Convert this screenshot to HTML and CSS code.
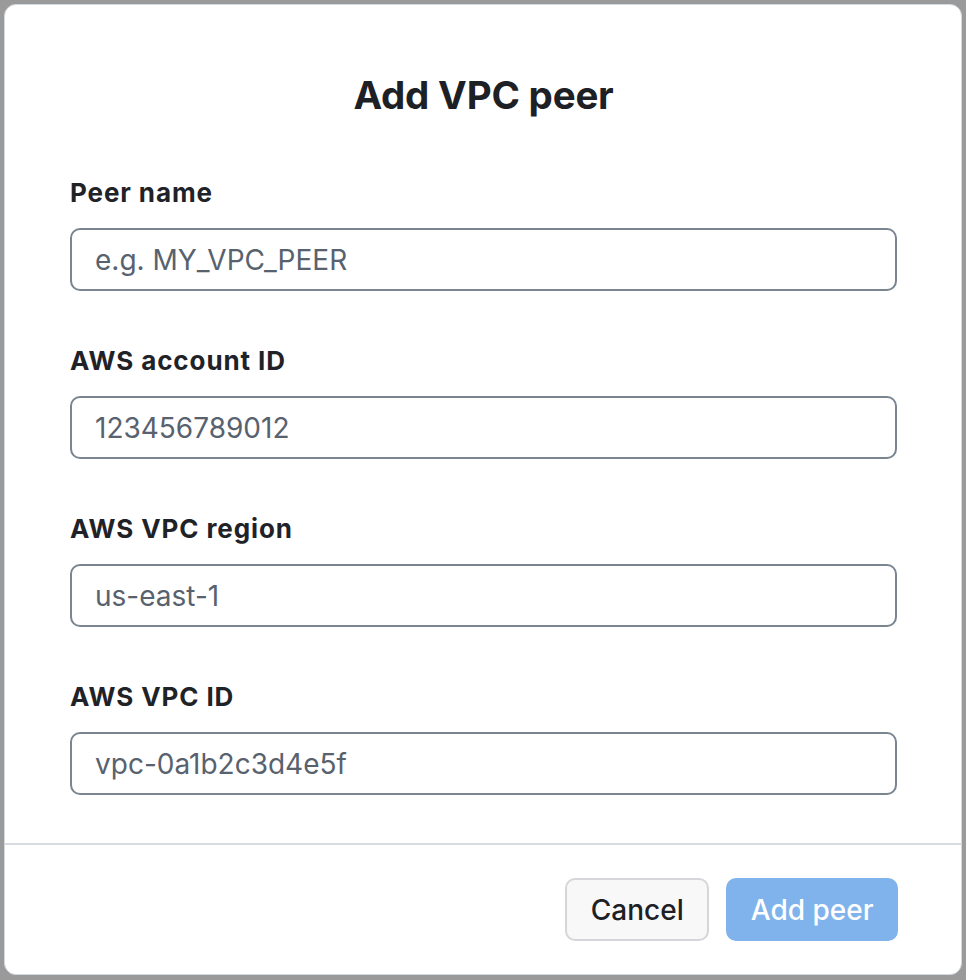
FILE: index.html
```html
<!DOCTYPE html>
<html lang="en">
<head>
<meta charset="utf-8">
<title>Add VPC peer</title>
<link rel="stylesheet" href="styles.css">
</head>
<body>
<div class="modal" role="dialog" aria-labelledby="modal-title">
  <div class="modal-body">
    <h1 class="modal-title" id="modal-title">Add VPC peer</h1>
    <form class="form">
      <div class="field">
        <label class="label" for="peer-name">Peer name</label>
        <input class="input" id="peer-name" type="text" placeholder="e.g. MY_VPC_PEER">
      </div>
      <div class="field">
        <label class="label" for="account-id">AWS account ID</label>
        <input class="input" id="account-id" type="text" placeholder="123456789012">
      </div>
      <div class="field">
        <label class="label" for="vpc-region">AWS VPC region</label>
        <input class="input" id="vpc-region" type="text" placeholder="us-east-1">
      </div>
      <div class="field">
        <label class="label" for="vpc-id">AWS VPC ID</label>
        <input class="input" id="vpc-id" type="text" placeholder="vpc-0a1b2c3d4e5f">
      </div>
    </form>
  </div>
  <div class="modal-footer">
    <button class="btn btn-secondary" type="button">Cancel</button>
    <button class="btn btn-primary" type="button" disabled>Add peer</button>
  </div>
</div>
</body>
</html>
```
FILE: styles.css
```css
* {
  box-sizing: border-box;
}

html, body {
  margin: 0;
  height: 100%;
}

body {
  background: #9a9a9a;
  padding: 4px;
  font-family: Inter, "Noto Sans", "Liberation Sans", sans-serif;
  color: #1d2125;
}

.modal {
  width: 958px;
  height: 971px;
  background: #ffffff;
  border: 1px solid #d3d9e0;
  border-radius: 12px;
  display: flex;
  flex-direction: column;
  overflow: hidden;
}

.modal-body {
  flex: 1;
  padding: 67px 64px 48px 65px;
}

.modal-title {
  margin: 0 0 57px;
  font-size: 38.5px;
  line-height: 46px;
  font-weight: 700;
  text-align: center;
  color: #1d2125;
  letter-spacing: -0.2px;
}

.form {
  display: flex;
  flex-direction: column;
  gap: 52px;
}

.field {
  display: flex;
  flex-direction: column;
}

.label {
  font-size: 26px;
  line-height: 35px;
  font-weight: 700;
  letter-spacing: 0.9px;
  color: #1f2328;
  margin-bottom: 18px;
}

.input {
  width: 100%;
  height: 63px;
  border: 2px solid #7b8591;
  border-radius: 10px;
  padding: 0 23px;
  font-family: inherit;
  font-size: 28px;
  color: #1d2125;
  background: #ffffff;
  outline: none;
}

.input::placeholder {
  color: #58626e;
  opacity: 1;
}

.modal-footer {
  border-top: 2px solid #d7dade;
  padding: 33px 63px 33px;
  display: flex;
  justify-content: flex-end;
  gap: 17px;
}

.btn {
  height: 63px;
  border-radius: 10px;
  font-family: inherit;
  font-size: 28px;
  font-weight: 500;
  white-space: nowrap;
  cursor: pointer;
}

.btn-secondary {
  padding: 0 23.5px;
  background: #f8f8f9;
  border: 2px solid #d4d6d9;
  color: #1d2125;
}

.btn-primary {
  padding: 0 22.5px;
  background: #80b3eb;
  border: 2px solid #80b3eb;
  color: #ffffff;
}
```
